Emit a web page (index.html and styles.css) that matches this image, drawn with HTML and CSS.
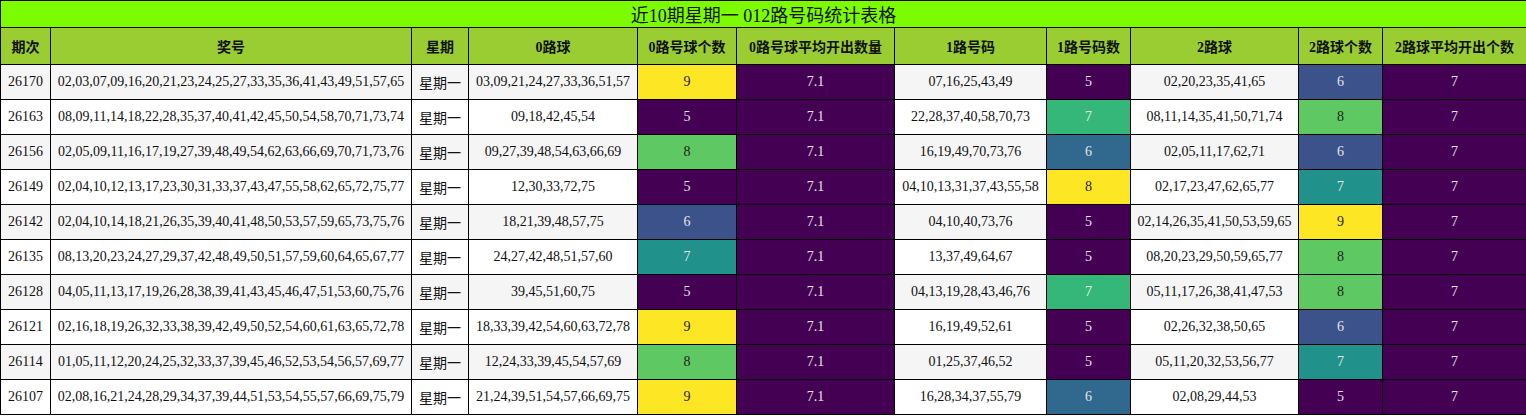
FILE: index.html
```html
<!DOCTYPE html>
<html lang="zh">
<head>
<meta charset="utf-8">
<link rel="stylesheet" href="styles.css">
</head>
<body>
<table class="stats">
  <colgroup>
    <col class="c1"><col class="c2"><col class="c3"><col class="c4"><col class="c5"><col class="c6"><col class="c7"><col class="c8"><col class="c9"><col class="c10"><col class="c11">
  </colgroup>
  <thead>
    <tr class="title"><th colspan="11">近10期星期一 012路号码统计表格</th></tr>
    <tr class="head">
      <th>期次</th><th>奖号</th><th>星期</th><th>0路球</th><th>0路号球个数</th><th>0路号球平均开出数量</th><th>1路号码</th><th>1路号码数</th><th>2路球</th><th>2路球个数</th><th>2路球平均开出个数</th>
    </tr>
  </thead>
  <tbody>
    <tr><td>26170</td><td>02,03,07,09,16,20,21,23,24,25,27,33,35,36,41,43,49,51,57,65</td><td class="wk">星期一</td><td>03,09,21,24,27,33,36,51,57</td><td class="v-yel">9</td><td class="v-pur">7.1</td><td>07,16,25,43,49</td><td class="v-pur">5</td><td>02,20,23,35,41,65</td><td class="v-blu">6</td><td class="v-pur">7</td></tr>
    <tr><td>26163</td><td>08,09,11,14,18,22,28,35,37,40,41,42,45,50,54,58,70,71,73,74</td><td class="wk">星期一</td><td>09,18,42,45,54</td><td class="v-pur">5</td><td class="v-pur">7.1</td><td>22,28,37,40,58,70,73</td><td class="v-grn2">7</td><td>08,11,14,35,41,50,71,74</td><td class="v-grn">8</td><td class="v-pur">7</td></tr>
    <tr><td>26156</td><td>02,05,09,11,16,17,19,27,39,48,49,54,62,63,66,69,70,71,73,76</td><td class="wk">星期一</td><td>09,27,39,48,54,63,66,69</td><td class="v-grn">8</td><td class="v-pur">7.1</td><td>16,19,49,70,73,76</td><td class="v-blu2">6</td><td>02,05,11,17,62,71</td><td class="v-blu">6</td><td class="v-pur">7</td></tr>
    <tr><td>26149</td><td>02,04,10,12,13,17,23,30,31,33,37,43,47,55,58,62,65,72,75,77</td><td class="wk">星期一</td><td>12,30,33,72,75</td><td class="v-pur">5</td><td class="v-pur">7.1</td><td>04,10,13,31,37,43,55,58</td><td class="v-yel">8</td><td>02,17,23,47,62,65,77</td><td class="v-tea">7</td><td class="v-pur">7</td></tr>
    <tr><td>26142</td><td>02,04,10,14,18,21,26,35,39,40,41,48,50,53,57,59,65,73,75,76</td><td class="wk">星期一</td><td>18,21,39,48,57,75</td><td class="v-blu">6</td><td class="v-pur">7.1</td><td>04,10,40,73,76</td><td class="v-pur">5</td><td>02,14,26,35,41,50,53,59,65</td><td class="v-yel">9</td><td class="v-pur">7</td></tr>
    <tr><td>26135</td><td>08,13,20,23,24,27,29,37,42,48,49,50,51,57,59,60,64,65,67,77</td><td class="wk">星期一</td><td>24,27,42,48,51,57,60</td><td class="v-tea">7</td><td class="v-pur">7.1</td><td>13,37,49,64,67</td><td class="v-pur">5</td><td>08,20,23,29,50,59,65,77</td><td class="v-grn">8</td><td class="v-pur">7</td></tr>
    <tr><td>26128</td><td>04,05,11,13,17,19,26,28,38,39,41,43,45,46,47,51,53,60,75,76</td><td class="wk">星期一</td><td>39,45,51,60,75</td><td class="v-pur">5</td><td class="v-pur">7.1</td><td>04,13,19,28,43,46,76</td><td class="v-grn2">7</td><td>05,11,17,26,38,41,47,53</td><td class="v-grn">8</td><td class="v-pur">7</td></tr>
    <tr><td>26121</td><td>02,16,18,19,26,32,33,38,39,42,49,50,52,54,60,61,63,65,72,78</td><td class="wk">星期一</td><td>18,33,39,42,54,60,63,72,78</td><td class="v-yel">9</td><td class="v-pur">7.1</td><td>16,19,49,52,61</td><td class="v-pur">5</td><td>02,26,32,38,50,65</td><td class="v-blu">6</td><td class="v-pur">7</td></tr>
    <tr><td>26114</td><td>01,05,11,12,20,24,25,32,33,37,39,45,46,52,53,54,56,57,69,77</td><td class="wk">星期一</td><td>12,24,33,39,45,54,57,69</td><td class="v-grn">8</td><td class="v-pur">7.1</td><td>01,25,37,46,52</td><td class="v-pur">5</td><td>05,11,20,32,53,56,77</td><td class="v-tea">7</td><td class="v-pur">7</td></tr>
    <tr><td>26107</td><td>02,08,16,21,24,28,29,34,37,39,44,51,53,54,55,57,66,69,75,79</td><td class="wk">星期一</td><td>21,24,39,51,54,57,66,69,75</td><td class="v-yel">9</td><td class="v-pur">7.1</td><td>16,28,34,37,55,79</td><td class="v-blu2">6</td><td>02,08,29,44,53</td><td class="v-pur">5</td><td class="v-pur">7</td></tr>
  </tbody>
</table>
</body>
</html>
```

FILE: styles.css
```css
html, body {
  margin: 0;
  padding: 0;
  background: #ffffff;
}

.stats {
  border-collapse: collapse;
  table-layout: fixed;
  width: 1526px;
  font-family: "Liberation Serif", "Noto Sans CJK SC", serif;
  font-size: 14px;
  color: #111;
}

.c1 { width: 50px; }
.c2 { width: 361px; }
.c3 { width: 57px; }
.c4 { width: 169px; }
.c5 { width: 99px; }
.c6 { width: 158px; }
.c7 { width: 152px; }
.c8 { width: 84px; }
.c9 { width: 168px; }
.c10 { width: 84px; }
.c11 { width: 144px; }

.stats th,
.stats td {
  border: 1px solid #000;
  text-align: center;
  padding: 0;
  white-space: nowrap;
  overflow: hidden;
}

.title th {
  background: #7cfc00;
  height: 26px;
  font-weight: normal;
  font-size: 18px;
  color: #111;
}

.head th {
  background: #9acd32;
  height: 36px;
  font-weight: bold;
  font-size: 14px;
}

.stats td {
  height: 34px;
}

.stats tbody tr:nth-child(odd) td {
  background: #f5f5f5;
}

.stats tbody tr:nth-child(even) td {
  background: #ffffff;
}

.stats tbody tr td.wk {
  font-family: "Noto Sans CJK SC", sans-serif;
  font-size: 14px;
}

.stats tbody tr td.v-yel { background: #fde725; color: #222; }
.stats tbody tr td.v-pur { background: #440154; color: #e6e6e6; }
.stats tbody tr td.v-blu { background: #3b528b; color: #e6e6e6; }
.stats tbody tr td.v-blu2 { background: #31688e; color: #e6e6e6; }
.stats tbody tr td.v-tea { background: #21918c; color: #e6e6e6; }
.stats tbody tr td.v-grn { background: #5ec962; color: #222; }
.stats tbody tr td.v-grn2 { background: #35b779; color: #f0f0f0; }
```
